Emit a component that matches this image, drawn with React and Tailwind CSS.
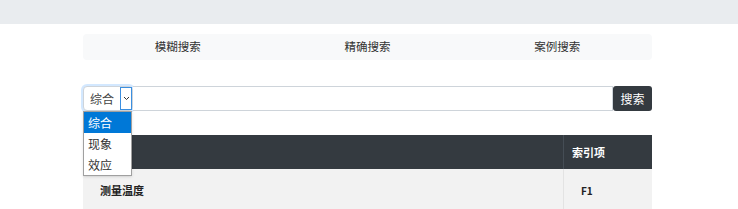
export default function App() {
  const tabs = ["模糊搜索", "精确搜索", "案例搜索"]
  const options = ["综合", "现象", "效应"]

  return (
    <div
      className="h-[209px] w-[738px] overflow-hidden bg-white text-[11px] text-[#212529]"
      style={{ fontFamily: '"Noto Sans CJK SC", "Noto Sans", sans-serif' }}
    >
      <div className="h-6 bg-[#e9ecef]" />

      <div className="ml-[83px] mt-[10px] flex h-[26px] w-[569px] rounded-sm bg-[#f8f9fa]">
        {tabs.map((t) => (
          <div key={t} className="flex flex-1 items-center justify-center text-[11.5px] text-[#333]">
            {t}
          </div>
        ))}
      </div>

      <div className="relative ml-[83px] mt-[26px] flex h-[25px] w-[569px]">
        <div className="flex h-[25px] w-[50px] rounded-sm border border-[#ced4da] bg-white shadow-[0_0_0_2px_rgba(128,189,255,0.35)]">
          <div className="flex flex-1 items-center justify-center text-[12px] text-[#444]">综合</div>
          <div className="flex w-[12px] items-center justify-center border border-[#3b8fe0]">
            <svg width="7" height="5" viewBox="0 0 7 5">
              <path d="M1 1 L3.5 3.5 L6 1" fill="none" stroke="#333" strokeWidth="1" />
            </svg>
          </div>
        </div>
        <div className="flex-1 border border-l-0 border-[#ced4da] bg-white" />
        <button className="h-[25px] w-[39px] rounded-[3px] bg-[#343a40] text-[12px] text-white">
          搜索
        </button>

        <div className="absolute left-0 top-[25px] z-10 w-[49px] border border-[#a0a0a0] bg-white shadow-sm">
          {options.map((o, i) => (
            <div
              key={o}
              className={
                i === 0
                  ? "flex h-[21px] items-center bg-[#0078d7] pl-[4px] text-[12px] text-white"
                  : "flex h-[21px] items-center pl-[4px] text-[12px] text-[#333]"
              }
            >
              {o}
            </div>
          ))}
        </div>
      </div>

      <div className="ml-[83px] mt-[24px] w-[569px]">
        <div className="flex h-[34px] bg-[#343a40] font-bold text-white">
          <div className="flex-1 border-r border-[#454d55]" />
          <div className="flex w-[88px] items-center pl-[8px]">索引项</div>
        </div>
        <div className="flex h-[42px] bg-[#f2f2f2] font-semibold text-[#222]">
          <div className="flex flex-1 items-center border-r border-[#e3e3e3] pl-[17px]">测量温度</div>
          <div className="flex w-[88px] items-center pl-[17px] text-[10px]">F1</div>
        </div>
      </div>
    </div>
  )
}
